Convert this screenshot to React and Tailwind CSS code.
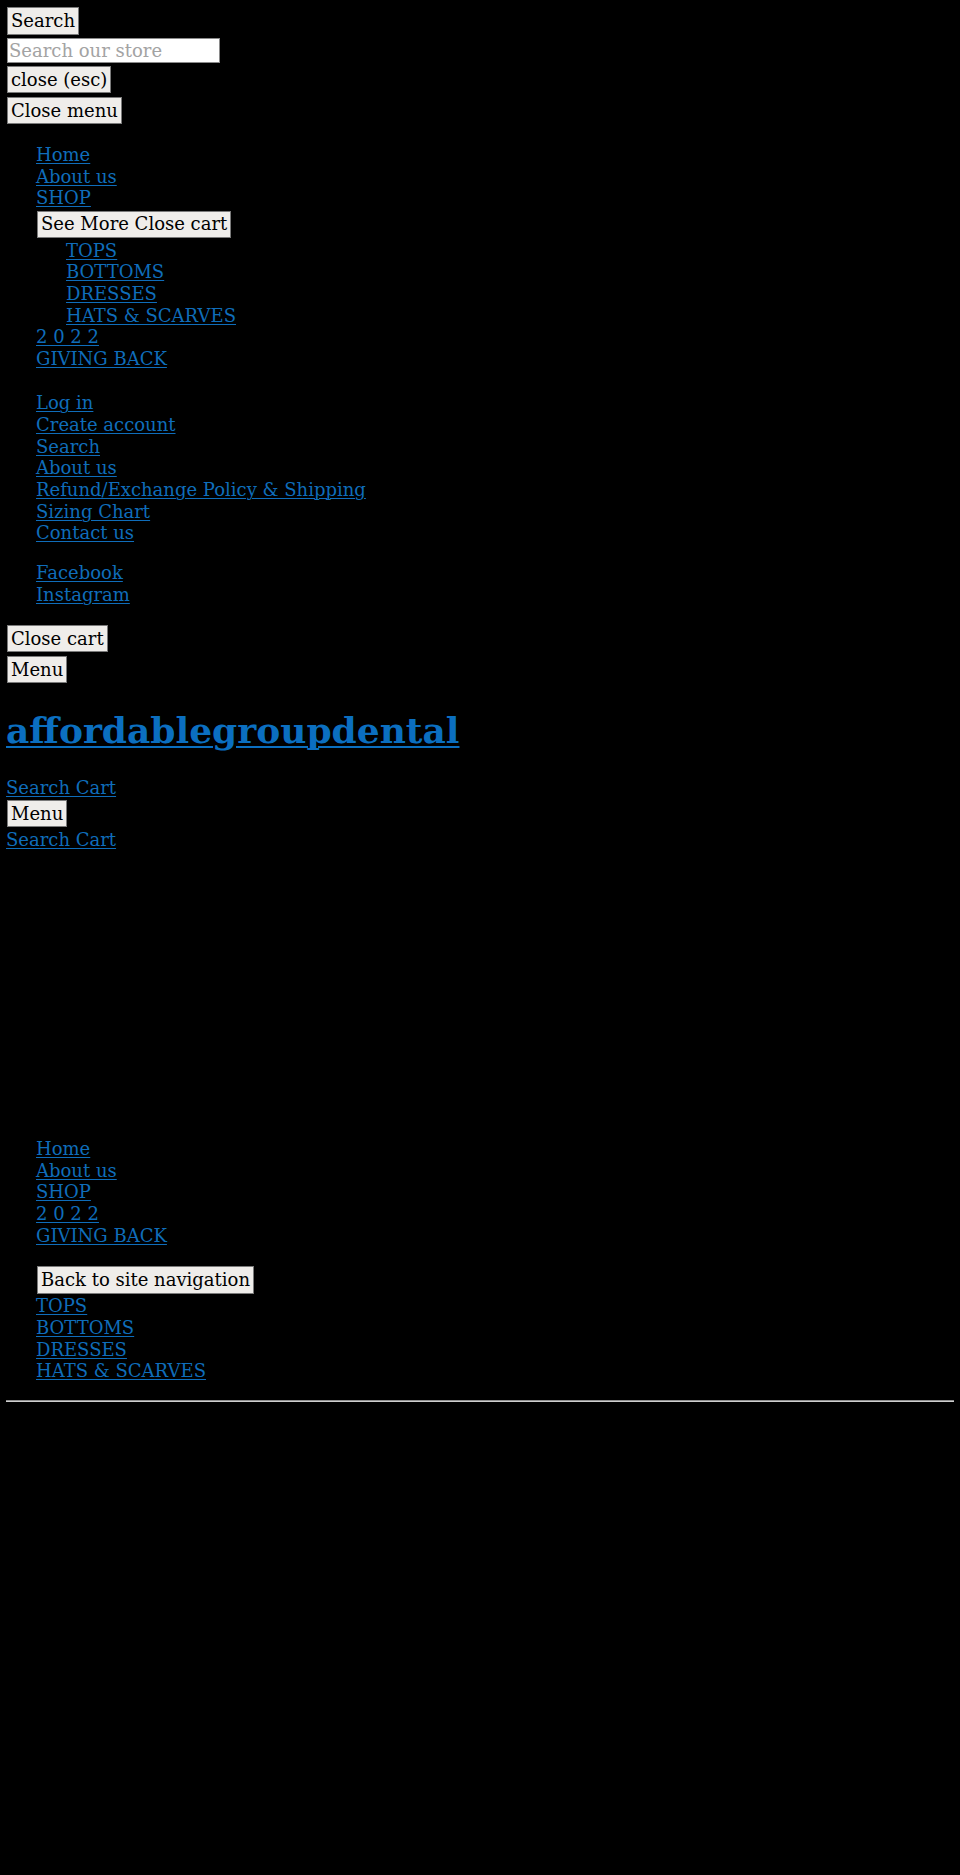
import React from "react";

const linkCls = "text-[#0f6dba] underline underline-offset-[2px] decoration-[1px]";

function Btn({ children, className = "" }) {
  return (
    <button
      className={
        "block bg-[#efedea] text-black border border-[#7a7a7a] px-[3px] text-[18px] leading-[21.67px] font-['DejaVu_Serif',serif] " +
        className
      }
    >
      {children}
    </button>
  );
}

function Links({ items, className = "" }) {
  return (
    <ul className={"pl-[30px] " + className}>
      {items.map((t, i) => (
        <li key={i} className="h-[21.67px]">
          <a href="#" className={linkCls}>
            {t}
          </a>
        </li>
      ))}
    </ul>
  );
}

export default function App() {
  return (
    <div className="min-h-[1875px] bg-black px-[6px] pt-[7px] font-['DejaVu_Serif',serif] text-[18px] leading-[21.67px] text-black">
      <Btn className="ml-px h-[28px]">Search</Btn>
      <input
        className="block ml-px mt-[3px] h-[25px] w-[213px] bg-white border border-[#8a8a8a] px-[1px] text-[18px] leading-[21.67px] text-black placeholder:text-[#a3a3a3] font-['DejaVu_Serif',serif] outline-none"
        placeholder="Search our store"
      />
      <Btn className="ml-px mt-[3px] h-[27px]">close (esc)</Btn>
      <Btn className="ml-px mt-[4px] h-[27px]">Close menu</Btn>

      <ul className="pl-[30px] mt-[20px]">
        {["Home", "About us", "SHOP"].map((t) => (
          <li key={t} className="h-[21.67px]">
            <a href="#" className={linkCls}>
              {t}
            </a>
          </li>
        ))}
        <li>
          <div className="h-[30.7px] pt-[1.7px]">
            <Btn className="ml-px h-[27.3px]">See More Close cart</Btn>
          </div>
          <Links items={["TOPS", "BOTTOMS", "DRESSES", "HATS & SCARVES"]} />
        </li>
        {["2 0 2 2", "GIVING BACK"].map((t) => (
          <li key={t} className="h-[21.67px]">
            <a href="#" className={linkCls}>
              {t}
            </a>
          </li>
        ))}
      </ul>

      <Links
        className="mt-[22.8px]"
        items={[
          "Log in",
          "Create account",
          "Search",
          "About us",
          "Refund/Exchange Policy & Shipping",
          "Sizing Chart",
          "Contact us",
        ]}
      />
      <Links className="mt-[18.3px]" items={["Facebook", "Instagram"]} />

      <Btn className="ml-px mt-[19.2px] h-[27.7px]">Close cart</Btn>
      <Btn className="ml-px mt-[3.3px] h-[27.3px]">Menu</Btn>

      <h1 className="mt-[25.7px] mb-[25px] text-[36px] leading-[43.5px] font-bold">
        <a href="#" className="text-[#0b6fc0] underline decoration-[2px] underline-offset-[3px]">
          affordablegroupdental
        </a>
      </h1>

      <div className="h-[21.67px]">
        <a href="#" className={linkCls}>
          Search Cart
        </a>
      </div>
      <Btn className="ml-px mt-[0.8px] h-[27.3px]">Menu</Btn>
      <div className="h-[21.67px] mt-[1.7px]">
        <a href="#" className={linkCls}>
          Search Cart
        </a>
      </div>

      <Links
        className="mt-[287.8px]"
        items={["Home", "About us", "SHOP", "2 0 2 2", "GIVING BACK"]}
      />

      <div className="pl-[30px] mt-[19.9px]">
        <Btn className="ml-px h-[27.3px]">Back to site navigation</Btn>
      </div>
      <Links
        className="mt-[1.8px]"
        items={["TOPS", "BOTTOMS", "DRESSES", "HATS & SCARVES"]}
      />

      <div className="mt-[18.2px] h-[2px] border-t border-t-[#8f8f8f] border-b border-b-[#cfcfcf]"></div>
    </div>
  );
}
